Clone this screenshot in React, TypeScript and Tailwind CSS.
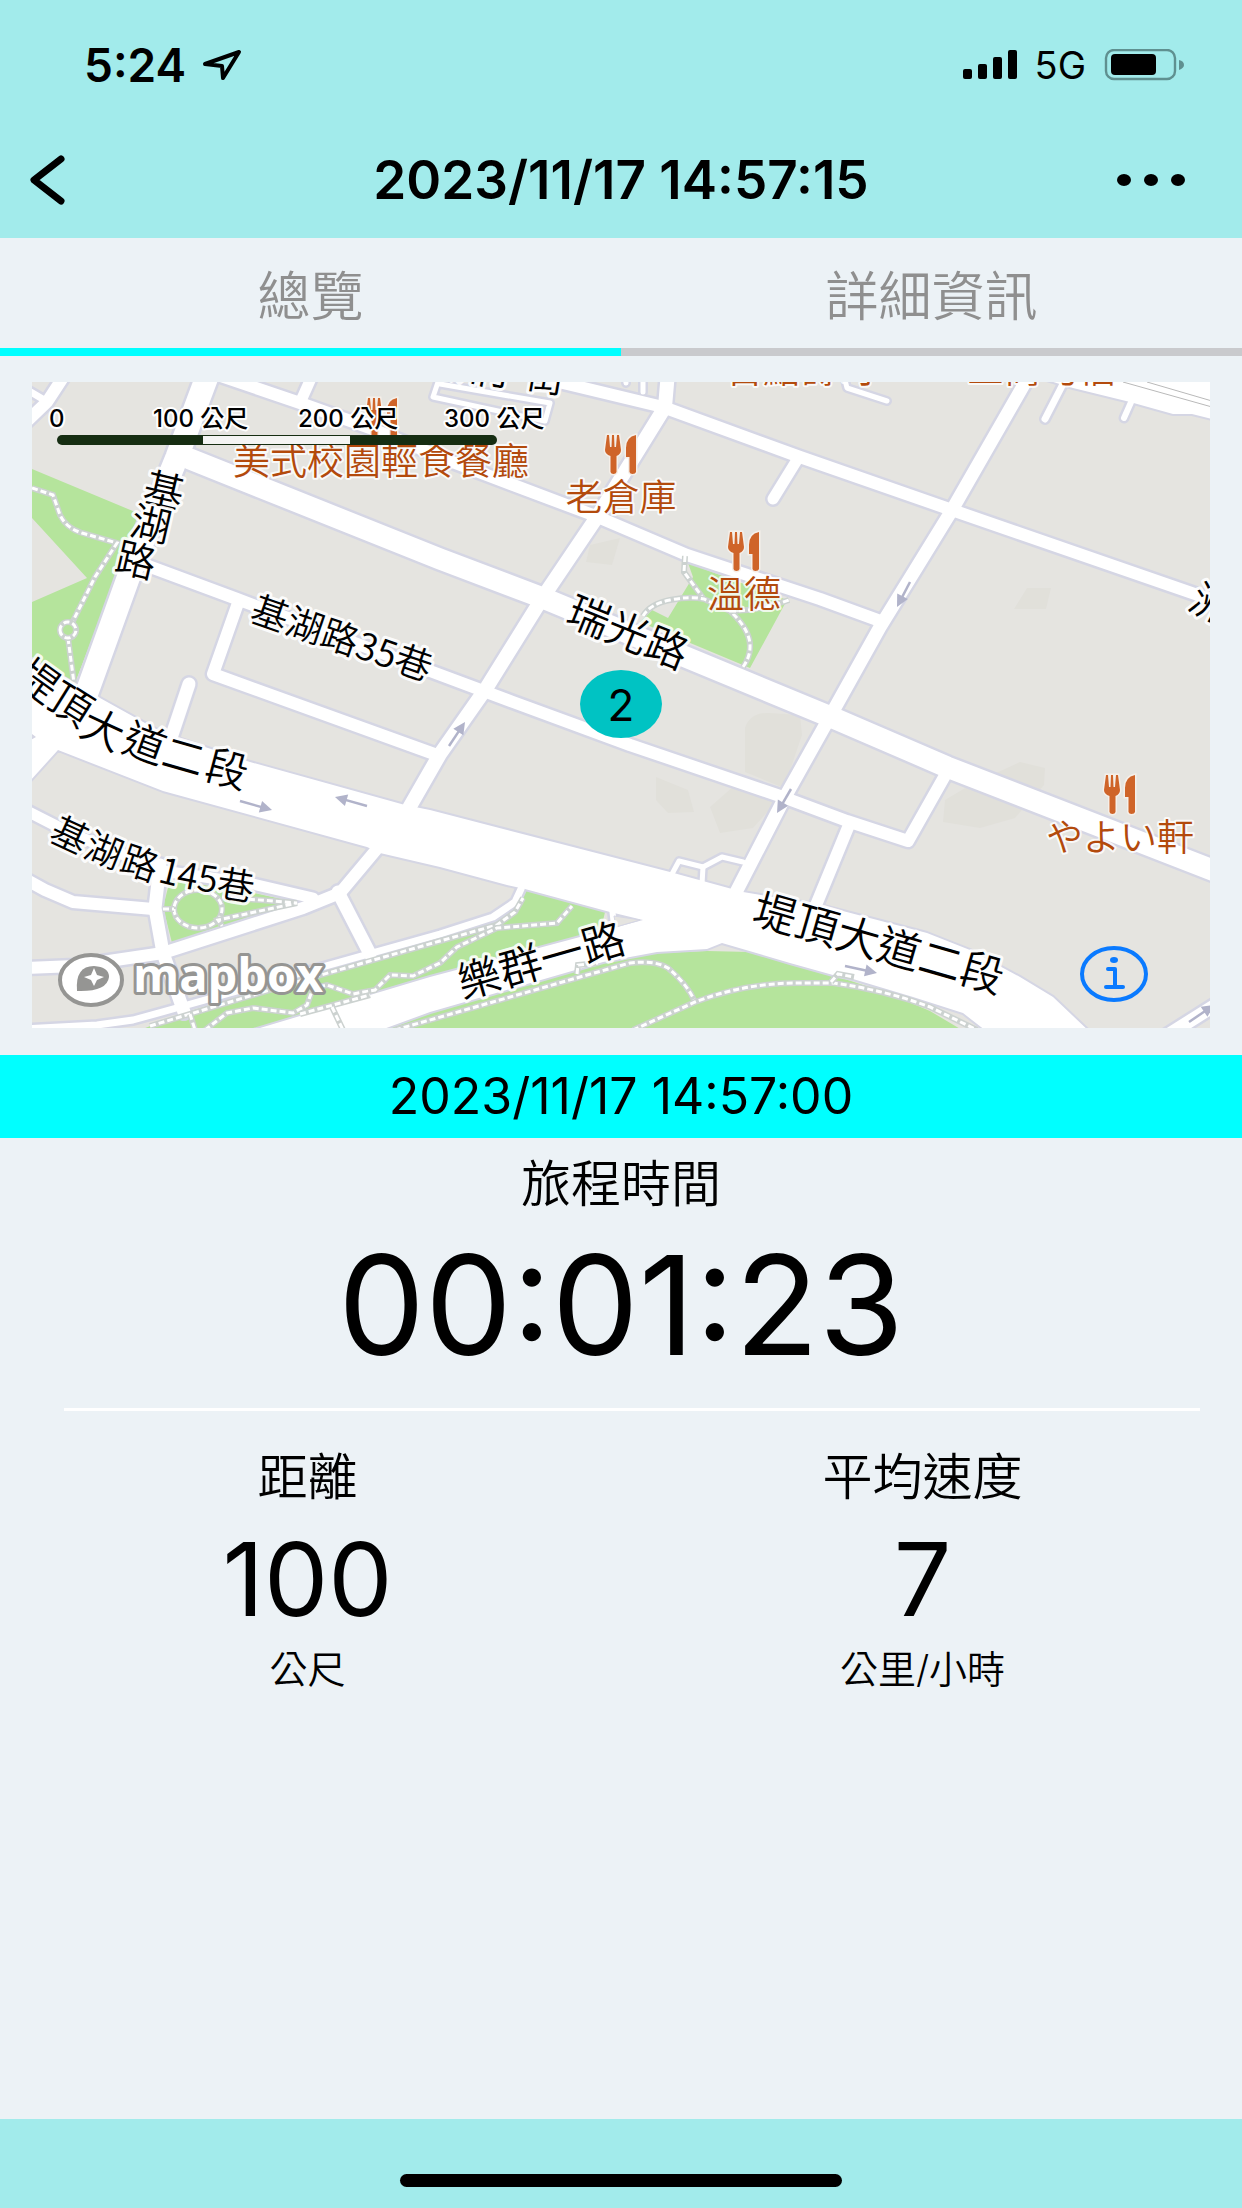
import { useState } from "react"

type Road = { d: string; w: number }
type Glyph = { c: string; x: number; y: number; r: number }

const ROADS: Road[] = [
  { d: "M190 459 L440 559 L543 598 L838 720 L947 767 L1220 873", w: 21 },
  { d: "M208 374 L177 457 L130 573 L86 695", w: 23 },
  { d: "M140 563 L237 599 L430 671 L513 702 L630 745 L780 796 L847 821 L908 841 L947 772", w: 12 },
  { d: "M238 603 L213 674 L437 755", w: 12 },
  { d: "M189 684 L172 735", w: 13 },
  { d: "M668 372 L665 407 L597 517 L543 597 L487 687 L440 754 L405 815", w: 14 },
  { d: "M215 374 L303 404 L370 428 L455 463 L593 515 L687 555 L820 599 L883 622", w: 12 },
  { d: "M535 373 L563 383 L663 407 L800 457 L952 510 L1215 601", w: 12 },
  { d: "M1030 374 L952 510 L880 627 L827 722 L785 797 L732 900", w: 13 },
  { d: "M797 460 L773 499", w: 11 },
  { d: "M849 825 L814 910", w: 12 },
  { d: "M25 810 L70 833 L163 871 L253 884 L313 898", w: 11 },
  { d: "M25 879 L45 890 L73 902 L153 909", w: 12 },
  { d: "M160 865 L155 908 L163 953 L184 1012", w: 13 },
  { d: "M25 968 L75 966 L163 953 L303 908 L340 893 L376 850", w: 12 },
  { d: "M338 892 L370 954", w: 13 },
  { d: "M25 1029 L97 1025 L133 1020 L180 1007 L440 934 L493 917 L515 902 L521 889", w: 7 },
  { d: "M64 376 L47 402 L24 424", w: 12 },
  { d: "M24 388 L46 401", w: 7 },
  { d: "M312 376 L300 403", w: 11 },
  { d: "M440 376 L433 397 L545 421 L550 403 L440 384", w: 5 },
  { d: "M643 374 L643 392", w: 5 },
  { d: "M625 374 L626 383", w: 5 },
  { d: "M844 376 L847 388 L887 401", w: 5 },
  { d: "M1063 384 L1045 419", w: 7 },
  { d: "M1132 400 L1124 418", w: 6 },
  { d: "M1160 1040 L1220 1002", w: 13 },
  { d: "M672 874 L679 861 L703 867 L702 884", w: 5 },
  { d: "M703 867 L722 857 L743 862", w: 5 },
  { d: "M612 908 L614 925", w: 6 },
]

// wide carriageways and ramps are easier to keep as areas
const AVENUES = [
  "M20 650 L32 660 L73 683 L163 733 L250 762 L405 805 L430 810 L670 872 L743 892 L820 905 L927 933 L970 950 L1020 977 L1053 997 L1092 1034 L990 1034 L963 1013 L913 997 L853 979 L833 975 L790 963 L722 943 L707 949 L657 952 L603 962 L430 1012 L370 1034 L240 1034 L430 977 L580 937 L643 920 L610 912 L525 889 L507 885 L440 867 L380 853 L367 847 L163 791 L58 750 L20 792 L20 746 L36 737 L20 725 Z",
  "M1030 374 L1040 378 L1073 388 L1130 402 L1173 414 L1192 414 L1220 421 L1220 374 Z",
]

const PARKS = [
  "M32 469 L140 514 L75 683 L32 657 L32 602 L87 578 L32 518 Z",
  "M688 563 L787 600 L750 668 L640 622 L652 610 L668 618 L693 577 Z",
  "M170 880 L163 907 L172 943 L300 903 L240 890 Z",
  "M525 889 L605 912 L600 934 L430 977 L255 1030 L140 1030 L187 1012 L440 938 L500 920 L520 905 Z",
  "M370 1030 L430 1012 L603 962 L657 953 L707 951 L750 952 L833 975 L890 994 L930 1011 L962 1030 Z",
]

const WOODS = [
  "M590 545 L620 538 L612 565 L586 562 Z",
  "M656 777 L688 790 L694 812 L668 813 L656 800 Z",
  "M710 807 L735 785 L778 800 L753 828 L720 833 Z",
  "M745 728 Q750 712 770 713 L800 715 L802 735 L784 788 L745 772 Z",
  "M943 822 L945 800 L972 784 L1020 762 L1045 768 L1044 785 L1015 818 L980 828 Z",
  "M1027 588 L1051 588 L1046 609 L1014 609 Z",
]

const FOOTPATHS = [
  "M32 488 L53 495 L60 515 Q66 528 82 533 L117 543 L95 577 L72 623",
  "M68 638 L74 683",
  "M60 630 a8 8 0 1 0 16 0 a8 8 0 1 0 -16 0",
  "M685 556 L684 572 L703 598",
  "M643 616 Q650 604 670 600 Q690 596 704 599 L730 611 Q762 640 743 667",
  "M730 611 Q760 611 789 600",
  "M174 909 a24 19 0 1 0 48 0 a24 19 0 1 0 -48 0",
  "M163 909 L174 909",
  "M222 897 L297 903 L218 920 L222 926",
  "M150 1026 L300 981 L440 941 L497 925 L515 912 L523 898",
  "M205 1030 L227 1013 L253 1008 L293 1013 L307 1005 L313 988 L327 985 L353 994 L375 990 L390 975 L413 976 L440 963 L457 947 L497 928 L557 923 L572 906",
  "M300 1014 L370 995",
  "M332 1007 L343 1030",
  "M190 1014 L195 1030",
  "M395 1030 L587 975 L630 963 Q655 960 668 968 Q688 985 695 1002",
  "M577 974 L578 965 L598 963",
  "M633 1030 L695 1002 Q745 983 797 983 L833 983 Q885 990 930 1007 L977 1030",
  "M831 982 L838 974 L854 977",
]

const ARROWS = [
  [240, 801, 272, 810],
  [367, 806, 335, 797],
  [449, 746, 465, 722],
  [791, 789, 777, 813],
  [910, 582, 897, 607],
  [845, 966, 877, 973],
  [1189, 1022, 1214, 1005],
]

const RESTAURANTS = [
  { name: "美式校園輕食餐廳", x: 381, y: 475, icon: [366, 398] },
  { name: "老倉庫", x: 621, y: 511, icon: [605, 435] },
  { name: "溫德", x: 744, y: 608, icon: [728, 532] },
  { name: "やよい軒", x: 1120, y: 851, icon: [1104, 775] },
  { name: "百點壽司", x: 800, y: 383, icon: null },
  { name: "三商巧福", x: 1041, y: 383, icon: null },
]

const STREETS = [
  { name: "瑞光路", x: 628, y: 632, r: 22, size: 42 },
  { name: "基湖路35巷", x: 342, y: 638, r: 19, size: 37 },
  { name: "堤頂大道二段", x: 879, y: 943, r: 16, size: 43 },
  { name: "樂群一路", x: 541, y: 960, r: -16, size: 43 },
]

const CURVED: { size: number; glyphs: Glyph[] }[] = [
  {
    size: 40,
    glyphs: [
      { c: "基", x: 164, y: 490, r: 13 },
      { c: "湖", x: 151, y: 524, r: 13 },
      { c: "路", x: 136, y: 560, r: 13 },
    ],
  },
  {
    size: 42,
    glyphs: [
      { c: "堤", x: 38, y: 680, r: 36 },
      { c: "頂", x: 71, y: 704, r: 32 },
      { c: "大", x: 103, y: 729, r: 25 },
      { c: "道", x: 145, y: 743, r: 20 },
      { c: "二", x: 184, y: 756, r: 16 },
      { c: "段", x: 227, y: 769, r: 15 },
    ],
  },
  {
    size: 37,
    glyphs: [
      { c: "基", x: 70, y: 835, r: 25 },
      { c: "湖", x: 104, y: 850, r: 22 },
      { c: "路", x: 140, y: 863, r: 19 },
      { c: "1", x: 170, y: 871, r: 14 },
      { c: "4", x: 188, y: 875, r: 11 },
      { c: "5", x: 208, y: 878, r: 9 },
      { c: "巷", x: 236, y: 885, r: 9 },
    ],
  },
  {
    size: 40,
    glyphs: [
      { c: "洲", x: 470, y: 366, r: 12 },
      { c: "子", x: 505, y: 371, r: 12 },
      { c: "街", x: 546, y: 376, r: 10 },
    ],
  },
  { size: 40, glyphs: [{ c: "洲", x: 1211, y: 604, r: 28 }] },
]

const TABS = ["總覽", "詳細資訊"]

function StatusBar() {
  return (
    <div className="flex h-[130px] items-center justify-between pl-[84px] pr-[57px]">
      <div className="flex items-center gap-4">
        <span className="text-[46px] leading-none font-semibold">5:24</span>
        <svg className="h-8 w-10" viewBox="0 0 40 32" fill="none">
          <path
            d="M37 3 L3 15 L20 17 L21 29 Z"
            stroke="#000"
            strokeWidth="4"
            strokeLinejoin="round"
          />
        </svg>
      </div>
      <div className="flex items-center gap-[18px]">
        <svg className="h-[30px] w-[54px]" viewBox="0 0 54 30">
          <rect x="0" y="19" width="9" height="10" rx="2" />
          <rect x="15" y="14" width="9" height="15" rx="2" />
          <rect x="30" y="7" width="9" height="22" rx="2" />
          <rect x="45" y="0" width="9" height="29" rx="2" />
        </svg>
        <span className="text-[38px] leading-none">5G</span>
        <svg className="h-8 w-[81px]" viewBox="0 0 81 32">
          <rect x="2" y="1" width="69" height="29" rx="8" fill="none" stroke="#5f9090" strokeWidth="2.4" />
          <rect x="7" y="5" width="45" height="21" rx="4" />
          <path d="M75 11 Q80 12 80 16 Q80 19 75 21 Z" fill="#5f9090" />
        </svg>
      </div>
    </div>
  )
}

function TitleBar() {
  return (
    <div className="grid h-[108px] grid-cols-[128px_1fr_128px] items-center pb-2">
      <button type="button" aria-label="返回" className="pl-[29px]">
        <svg className="h-[50px] w-9" viewBox="0 0 36 50" fill="none">
          <path
            d="M32 4 L5 25 L32 46"
            stroke="#000"
            strokeWidth="7"
            strokeLinecap="round"
            strokeLinejoin="round"
          />
        </svg>
      </button>
      <h1 className="text-center text-[53px] leading-none font-semibold">2023/11/17 14:57:15</h1>
      <button type="button" aria-label="更多" className="flex justify-end pr-[57px]">
        <svg className="h-3 w-[68px]" viewBox="0 0 68 12">
          <ellipse cx="7" cy="6" rx="7" ry="6" />
          <ellipse cx="34" cy="6" rx="7" ry="6" />
          <ellipse cx="61" cy="6" rx="7" ry="6" />
        </svg>
      </button>
    </div>
  )
}

function ForkKnife({ x, y }: { x: number; y: number }) {
  return (
    <path
      transform={`translate(${x} ${y})`}
      d="M2 0 H4 L5 12 H6.5 L7 0 H9 L9.5 12 H11 L12 0 H14 L16 15 Q16 19 11.500 21 V37 Q11 39 8.500 39 Q6 39 5.500 37 V21 Q0 19 0 15 Z M31 0 V37 Q30.500 39 27.500 39 Q25 39 24.500 37 V22 H21 V13 Q21 2 31 0 Z"
      fill="#cf6429"
      stroke="#f5efe9"
      strokeWidth="3"
      paintOrder="stroke"
    />
  )
}

function TripMap() {
  return (
    <div className="relative">
      <svg
        className="block w-full font-['Noto_Sans_CJK_TC',sans-serif] font-[350]"
        viewBox="32 382 1178 646"
        role="img"
        aria-label="行程地圖"
      >
        <rect x="32" y="382" width="1178" height="646" fill="#e5e4e0" />
        {WOODS.map((d) => (
          <path key={d} d={d} fill="#e1e0da" />
        ))}
        {PARKS.map((d) => (
          <path key={d} d={d} fill="#b5e49c" />
        ))}

        <g fill="none" stroke="#d5d6e4" strokeLinejoin="round" strokeLinecap="round">
          {ROADS.map((r) => (
            <path key={r.d} d={r.d} strokeWidth={r.w + 5} />
          ))}
          {AVENUES.map((d) => (
            <path key={d} d={d} strokeWidth="4" />
          ))}
        </g>
        <g fill="none" stroke="#fff" strokeLinejoin="round" strokeLinecap="round">
          {ROADS.map((r) => (
            <path key={r.d} d={r.d} strokeWidth={r.w} />
          ))}
        </g>
        {AVENUES.map((d) => (
          <path key={d} d={d} fill="#fff" />
        ))}
        <path d="M614 916 L640 920 L616 927 Z" fill="#e5e4e0" stroke="#d5d6e4" />
        <path d="M1123 382 L1212 407 M1147 382 L1212 401" stroke="#b9b9b9" fill="none" />

        <g fill="none">
          {FOOTPATHS.map((d) => (
            <g key={d}>
              <path d={d} stroke="#ccd2d0" strokeWidth="6" />
              <path d={d} stroke="#fff" strokeWidth="3" strokeDasharray="6 3" />
            </g>
          ))}
        </g>

        {ARROWS.map(([x1, y1, x2, y2]) => {
          const angle = (Math.atan2(y2 - y1, x2 - x1) * 180) / Math.PI
          const len = Math.hypot(x2 - x1, y2 - y1)
          return (
            <g key={`${x1}-${y1}`} transform={`translate(${x1} ${y1}) rotate(${angle})`}>
              <path d={`M0 0 H${len - 8}`} stroke="#b1b3ca" strokeWidth="2.500" />
              <path d={`M${len} 0 L${len - 12} -6 V6 Z`} fill="#b1b3ca" />
            </g>
          )
        })}

        <g textAnchor="middle" stroke="#fff" strokeOpacity="0.9" strokeWidth="6" strokeLinejoin="round" paintOrder="stroke">
          {STREETS.map((s) => (
            <text
              key={s.name}
              transform={`translate(${s.x} ${s.y}) rotate(${s.r})`}
              y={s.size * 0.37}
              fontSize={s.size}
            >
              {s.name}
            </text>
          ))}
          {CURVED.map((label, i) => (
            <g key={i} fontSize={label.size}>
              {label.glyphs.map((g) => (
                <text
                  key={g.c}
                  transform={`translate(${g.x} ${g.y}) rotate(${g.r})`}
                  y={label.size * 0.37}
                >
                  {g.c}
                </text>
              ))}
            </g>
          ))}
        </g>

        {RESTAURANTS.map((p) => (
          <g key={p.name}>
            {p.icon && <ForkKnife x={p.icon[0]} y={p.icon[1]} />}
            <text
              x={p.x}
              y={p.y}
              textAnchor="middle"
              fontSize="37"
              fill="#b34a0c"
              stroke="#fff"
              strokeOpacity="0.8"
              strokeWidth="4"
              strokeLinejoin="round"
              paintOrder="stroke"
            >
              {p.name}
            </text>
          </g>
        ))}

        {/* scale bar */}
        <g
          className="font-['Inter','Noto_Sans_CJK_TC',sans-serif]"
          fontSize="24"
          fontWeight="500"
          stroke="#fff"
          strokeWidth="4"
          strokeLinejoin="round"
          paintOrder="stroke"
        >
          <text x="49" y="427">0</text>
          <text x="153" y="427">100 公尺</text>
          <text x="298" y="427">200 公尺</text>
          <text x="444" y="427">300 公尺</text>
        </g>
        <rect x="57" y="435" width="440" height="10" rx="5" fill="#162d12" />
        <rect x="203" y="436" width="147" height="8" fill="#f4f4f3" />

        <ellipse cx="621" cy="704" rx="41" ry="34" fill="#00c3c3" />
        <text
          x="621"
          y="721"
          textAnchor="middle"
          fontSize="44"
          fontWeight="400"
          className="font-['Inter',sans-serif]"
        >
          2
        </text>

        <a href="https://www.mapbox.com" aria-label="Mapbox">
          <ellipse cx="91" cy="980" rx="31" ry="25" fill="#fff" stroke="#959593" strokeWidth="4" />
          <path d="M77 991 Q75 966 94 966 Q109 967 109 977 Q107 992 77 991 Z" fill="#959593" />
          <path d="M94 968 L97 975 L104 977 L97 980 L94 986 L91 980 L84 977 L91 975 Z" fill="#fff" />
          <text
            x="133"
            y="992"
            fontSize="47"
            fontWeight="700"
            fill="#fff"
            stroke="#959593"
            strokeWidth="6"
            strokeLinejoin="round"
            paintOrder="stroke"
            className="font-['Open_Sans',sans-serif]"
          >
            mapbox
          </text>
        </a>
      </svg>
      <button type="button" aria-label="地圖資訊" className="absolute right-[61px] bottom-[25px]">
        <svg className="h-[58px] w-[70px]" viewBox="0 0 70 58" fill="none" stroke="#0a7aff">
          <ellipse cx="35" cy="29" rx="32" ry="26" strokeWidth="4" />
          <ellipse cx="35" cy="15" rx="4" ry="3" fill="#0a7aff" stroke="none" />
          <path d="M29 24 H36 V42 M27 42 H44" strokeWidth="4" strokeLinecap="round" strokeLinejoin="round" />
        </svg>
      </button>
    </div>
  )
}

function Metric({ label, value, unit }: { label: string; value: string; unit: string }) {
  return (
    <div className="flex flex-col items-center">
      <h2 className="text-[50px] leading-[60px] font-[350]">{label}</h2>
      <p className="mt-[22px] text-[102px] leading-[100px]">{value}</p>
      <p className="mt-4 text-[38px] leading-[48px] font-[350]">{unit}</p>
    </div>
  )
}

export default function App() {
  const [active, setActive] = useState(0)

  return (
    <div className="flex min-h-screen flex-col bg-[#ecf2f6] font-['Inter','Noto_Sans_CJK_TC',sans-serif] text-black">
      <header className="bg-[#a2ebeb]">
        <StatusBar />
        <TitleBar />
      </header>

      <nav className="grid grid-cols-2">
        {TABS.map((tab, i) => (
          <button
            key={tab}
            type="button"
            onClick={() => setActive(i)}
            className={`h-[118px] border-b-8 pt-2 text-[53px] leading-none font-[350] text-[#8f8f8f] ${
              i === active ? "border-[#00ffff]" : "border-[#c9cacd]"
            }`}
          >
            {tab}
          </button>
        ))}
      </nav>

      <main>
        <div className="px-8 pt-[26px] pb-[27px]">
          <TripMap />
        </div>
        <div className="bg-[#00ffff] text-center text-[50px] leading-[83px]">2023/11/17 14:57:00</div>

        <section className="flex flex-col items-center pt-4">
          <h2 className="text-[50px] leading-[60px] font-[350]">旅程時間</h2>
          <p className="mt-4 text-[138px] leading-[150px]">00:01:23</p>
        </section>

        <hr className="mt-7 mr-[42px] ml-16 border-t-[3px] border-white" />

        <section className="grid grid-cols-2 pt-[36px] pr-3">
          <Metric label="距離" value="100" unit="公尺" />
          <Metric label="平均速度" value="7" unit="公里/小時" />
        </section>
      </main>

      <footer className="mt-auto flex h-[89px] items-end justify-center bg-[#a2ebeb] pb-[21px]">
        <div className="h-[13px] w-[442px] rounded-full bg-black" />
      </footer>
    </div>
  )
}
